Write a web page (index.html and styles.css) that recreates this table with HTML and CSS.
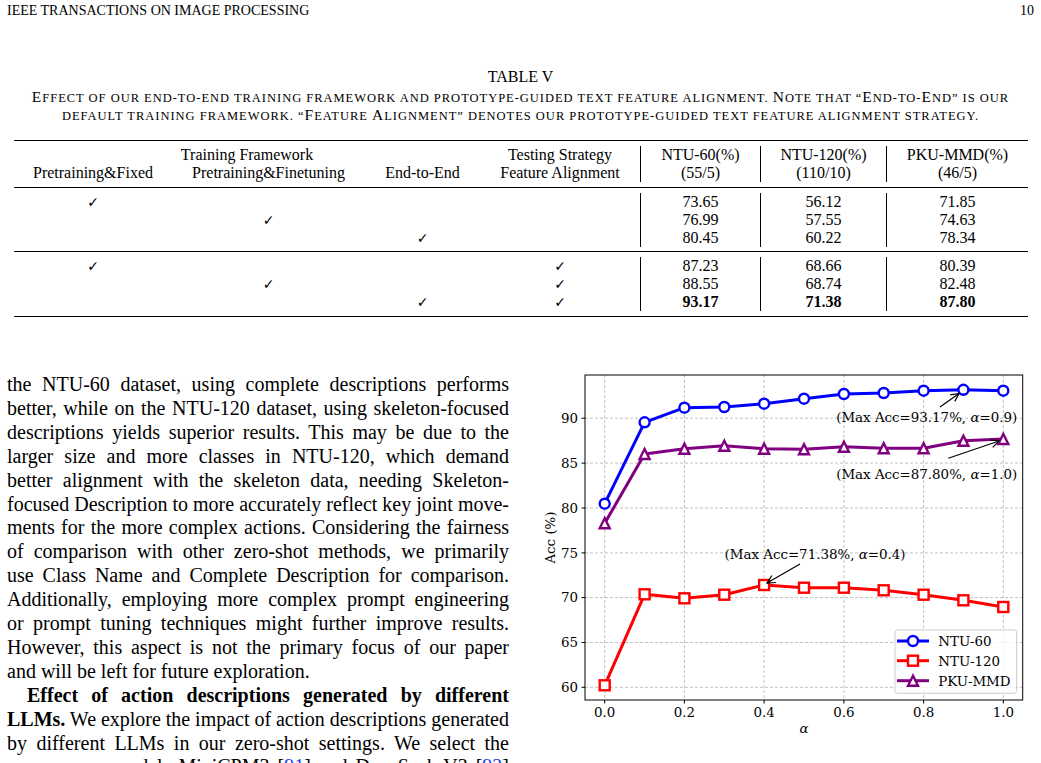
FILE: index.html
```html
<!DOCTYPE html>
<html lang="en">
<head>
  <meta charset="UTF-8">
  <title>IEEE Transactions on Image Processing - page 10</title>
  <link rel="stylesheet" href="styles.css">
</head>
<body>
  <div class="page">
    <header class="running-head">
      <span>IEEE TRANSACTIONS ON IMAGE PROCESSING</span>
      <span>10</span>
    </header>

    <div class="table-float">
      <div class="caption">
        <div class="caption-label">TABLE V</div>
        <div class="caption-text">
          <span class="cap">E</span>ffect of our end-to-end training framework and prototype-guided text feature alignment. <span class="cap">N</span>ote that “<span class="cap">E</span>nd-to-<span class="cap">E</span>nd” is our<br>
          default training framework. “<span class="cap">F</span>eature <span class="cap">A</span>lignment” denotes our prototype-guided text feature alignment strategy.
        </div>
      </div>

      <div class="booktab">
        <div class="tgroup thead">
          <div class="span-train">Training Framework</div>
          <div class="c4 r1">Testing Strategy</div>
          <div class="num both">NTU-60(%)<br>(55/5)</div>
          <div class="num both">NTU-120(%)<br>(110/10)</div>
          <div class="num both">PKU-MMD(%)<br>(46/5)</div>
          <div class="c1 r2">Pretraining&amp;Fixed</div>
          <div class="c2 r2">Pretraining&amp;Finetuning</div>
          <div class="c3 r2">End-to-End</div>
          <div class="c4 r2">Feature Alignment</div>
        </div>

        <div class="tgroup">
          <div class="tick">✓</div><div></div><div></div><div></div>
          <div class="num">73.65</div><div class="num">56.12</div><div class="num">71.85</div>
          <div></div><div class="tick">✓</div><div></div><div></div>
          <div class="num">76.99</div><div class="num">57.55</div><div class="num">74.63</div>
          <div></div><div></div><div class="tick">✓</div><div></div>
          <div class="num">80.45</div><div class="num">60.22</div><div class="num">78.34</div>
        </div>

        <div class="tgroup">
          <div class="tick">✓</div><div></div><div></div><div class="tick">✓</div>
          <div class="num">87.23</div><div class="num">68.66</div><div class="num">80.39</div>
          <div></div><div class="tick">✓</div><div></div><div class="tick">✓</div>
          <div class="num">88.55</div><div class="num">68.74</div><div class="num">82.48</div>
          <div></div><div></div><div class="tick">✓</div><div class="tick">✓</div>
          <div class="num best">93.17</div><div class="num best">71.38</div><div class="num best">87.80</div>
        </div>
      </div>
    </div>

    <div class="columns">
      <div class="text-col">
        <p class="para">
          <span class="ln">the NTU-60 dataset, using complete descriptions performs</span>
          <span class="ln">better, while on the NTU-120 dataset, using skeleton-focused</span>
          <span class="ln">descriptions yields superior results. This may be due to the</span>
          <span class="ln">larger size and more classes in NTU-120, which demand</span>
          <span class="ln">better alignment with the skeleton data, needing Skeleton-</span>
          <span class="ln">focused Description to more accurately reflect key joint move-</span>
          <span class="ln">ments for the more complex actions. Considering the fairness</span>
          <span class="ln">of comparison with other zero-shot methods, we primarily</span>
          <span class="ln">use Class Name and Complete Description for comparison.</span>
          <span class="ln">Additionally, employing more complex prompt engineering</span>
          <span class="ln">or prompt tuning techniques might further improve results.</span>
          <span class="ln">However, this aspect is not the primary focus of our paper</span>
          <span class="ln end">and will be left for future exploration.</span>
        </p>
        <p class="para">
          <span class="ln indent"><b>Effect of action descriptions generated by different</b></span>
          <span class="ln"><b>LLMs.</b> We explore the impact of action descriptions generated</span>
          <span class="ln">by different LLMs in our zero-shot settings. We select the</span>
          <span class="ln">open-source models MiniCPM3 [<span class="cite">91</span>] and DeepSeek-V3 [<span class="cite">92</span>]</span>
        </p>
      </div>

      <figure class="plot">
        <svg width="511" height="393" viewBox="530 370 511 393" xmlns="http://www.w3.org/2000/svg">
          <defs>
            <marker id="mk-circle" markerWidth="16" markerHeight="16" refX="8" refY="8" markerUnits="userSpaceOnUse">
              <circle cx="8" cy="8" r="5" fill="#fff" stroke="#0000ff" stroke-width="2.4"/>
            </marker>
            <marker id="mk-square" markerWidth="16" markerHeight="16" refX="8" refY="8" markerUnits="userSpaceOnUse">
              <rect x="3" y="3" width="10" height="10" fill="#fff" stroke="#ff0000" stroke-width="2.4"/>
            </marker>
            <marker id="mk-tri" markerWidth="16" markerHeight="16" refX="8" refY="8" markerUnits="userSpaceOnUse">
              <path d="M8 3 L3 13 L13 13 Z" fill="#fff" stroke="#800080" stroke-width="2.4"/>
            </marker>
          </defs>

          <!-- grid -->
          <g class="grid">
            <line x1="604.7" y1="375" x2="604.7" y2="700"/>
            <line x1="684.4" y1="375" x2="684.4" y2="700"/>
            <line x1="764.1" y1="375" x2="764.1" y2="700"/>
            <line x1="843.9" y1="375" x2="843.9" y2="700"/>
            <line x1="923.6" y1="375" x2="923.6" y2="700"/>
            <line x1="1003.3" y1="375" x2="1003.3" y2="700"/>
            <line x1="585" y1="418.2" x2="1022.7" y2="418.2"/>
            <line x1="585" y1="463.1" x2="1022.7" y2="463.1"/>
            <line x1="585" y1="508" x2="1022.7" y2="508"/>
            <line x1="585" y1="552.9" x2="1022.7" y2="552.9"/>
            <line x1="585" y1="597.6" x2="1022.7" y2="597.6"/>
            <line x1="585" y1="642.5" x2="1022.7" y2="642.5"/>
            <line x1="585" y1="687.3" x2="1022.7" y2="687.3"/>
          </g>

          <!-- series -->
          <polyline class="series ntu60 marked" points="604.7,503.7 644.6,422.3 684.4,407.7 724.3,407 764.1,403.7 804,398.7 843.9,394 883.7,393 923.6,390.7 963.4,389.8 1003.3,390.7"/>
          <polyline class="series ntu120 marked" points="604.7,685.3 644.6,594.3 684.4,598.3 724.3,594.7 764.1,585 804,587.7 843.9,587.7 883.7,590.3 923.6,594.7 963.4,600.3 1003.3,607"/>
          <polyline class="series pku marked" points="604.7,523.3 644.6,454 684.4,448.7 724.3,445.7 764.1,448.7 804,449.3 843.9,446.7 883.7,448.3 923.6,448.3 963.4,440.7 1003.3,439"/>

          <!-- annotations -->
          <g class="arrow">
            <line x1="940" y1="407" x2="959" y2="393.5"/>
            <path d="M950.2 394.9 L959 393.5 L954.8 401.4"/>
            <line x1="948.3" y1="458.3" x2="999" y2="441"/>
            <path d="M990.1 439.8 L999 441 L992.7 447.4"/>
            <line x1="800" y1="564" x2="767" y2="583"/>
            <path d="M771.9 575.5 L767 583 L775.9 582.5"/>
          </g>
          <g class="label">
            <text x="926.7" y="421.8" text-anchor="middle">(Max Acc=93.17%, <tspan class="it">α</tspan>=0.9)</text>
            <text x="926.7" y="478.8" text-anchor="middle">(Max Acc=87.80%, <tspan class="it">α</tspan>=1.0)</text>
            <text x="815" y="558.8" text-anchor="middle">(Max Acc=71.38%, <tspan class="it">α</tspan>=0.4)</text>
          </g>

          <!-- axes frame and ticks -->
          <rect class="frame" x="585" y="375" width="437.7" height="325"/>
          <g class="ticks">
            <line x1="581.5" y1="418.2" x2="585" y2="418.2"/>
            <line x1="581.5" y1="463.1" x2="585" y2="463.1"/>
            <line x1="581.5" y1="508" x2="585" y2="508"/>
            <line x1="581.5" y1="552.9" x2="585" y2="552.9"/>
            <line x1="581.5" y1="597.6" x2="585" y2="597.6"/>
            <line x1="581.5" y1="642.5" x2="585" y2="642.5"/>
            <line x1="581.5" y1="687.3" x2="585" y2="687.3"/>
            <line x1="604.7" y1="700" x2="604.7" y2="703.5"/>
            <line x1="684.4" y1="700" x2="684.4" y2="703.5"/>
            <line x1="764.1" y1="700" x2="764.1" y2="703.5"/>
            <line x1="843.9" y1="700" x2="843.9" y2="703.5"/>
            <line x1="923.6" y1="700" x2="923.6" y2="703.5"/>
            <line x1="1003.3" y1="700" x2="1003.3" y2="703.5"/>
          </g>
          <g class="label" text-anchor="end">
            <text x="578" y="423">90</text>
            <text x="578" y="467.9">85</text>
            <text x="578" y="512.8">80</text>
            <text x="578" y="557.7">75</text>
            <text x="578" y="602.4">70</text>
            <text x="578" y="647.3">65</text>
            <text x="578" y="692.1">60</text>
          </g>
          <g class="label" text-anchor="middle">
            <text x="604.7" y="717">0.0</text>
            <text x="684.4" y="717">0.2</text>
            <text x="764.1" y="717">0.4</text>
            <text x="843.9" y="717">0.6</text>
            <text x="923.6" y="717">0.8</text>
            <text x="1003.3" y="717">1.0</text>
            <text class="it" x="803.9" y="733">α</text>
            <text x="0" y="0" transform="translate(554.5 537.5) rotate(-90)">Acc (%)</text>
          </g>

          <!-- legend -->
          <rect class="legend-box" x="895" y="630" width="121.7" height="63.3" rx="2.5"/>
          <polyline class="series ntu60 key" points="897,641 913,641 929,641"/>
          <polyline class="series ntu120 key" points="897,660.7 913,660.7 929,660.7"/>
          <polyline class="series pku key" points="897,680.7 913,680.7 929,680.7"/>
          <g class="label">
            <text x="938.3" y="645.8">NTU-60</text>
            <text x="938.3" y="665.5">NTU-120</text>
            <text x="938.3" y="685.5">PKU-MMD</text>
          </g>
        </svg>
      </figure>
    </div>
  </div>
</body>
</html>
```

FILE: styles.css
```css
body {
  margin: 0;
  background: #ffffff;
  color: #000000;
  font-family: 'Liberation Serif', 'Times New Roman', serif;
}

.page {
  width: 1041px;
  height: 763px;
  overflow: hidden;
}

.running-head {
  display: flex;
  justify-content: space-between;
  padding: 3px 7px 0 7px;
  font-size: 14px;
  line-height: 16px;
}

/* table float */
.caption {
  margin-top: 48.6px;
  text-align: center;
  font-size: 16px;
  line-height: 17px;
}

.caption-label {
  margin-bottom: 4.2px;
}

.caption-text {
  text-transform: uppercase;
  font-size: 12.5px;
  line-height: 17px;
  letter-spacing: 0.98px;
}

.caption-text .cap {
  font-size: 15.5px;
  line-height: 1;
}

.booktab {
  width: 1014px;
  margin: 15.2px 0 0 14px;
  border-top: 1.5px solid #000;
  border-bottom: 1.5px solid #000;
  font-size: 16px;
  line-height: 18px;
}

.tgroup {
  display: grid;
  grid-template-columns: 158px 193px 115px 160px 120px 126px 142px;
  padding: 4.5px 0 4.5px 0;
  text-align: center;
}

.tgroup:last-child {
  padding-bottom: 5.5px;
}

.tgroup + .tgroup {
  border-top: 1px solid #000;
}

.thead {
  grid-template-rows: 18px 18px;
  padding: 5px 0 5.5px 0;
}

.span-train {
  grid-column: 1 / 4;
  grid-row: 1;
}

.c1 { grid-column: 1; }
.c2 { grid-column: 2; }
.c3 { grid-column: 3; }
.c4 { grid-column: 4; }
.r1 { grid-row: 1; }
.r2 { grid-row: 2; }

.num {
  border-left: 1px solid #000;
}

.num.both {
  grid-row: 1 / 3;
}

.best {
  font-weight: bold;
}

.tick {
  font-family: 'DejaVu Sans', sans-serif;
  font-size: 14px;
}

/* two column text + figure */
.columns {
  display: flex;
  margin-top: 52.5px;
}

.text-col {
  width: 502px;
  margin-left: 7px;
  padding-top: 3px;
  font-size: 20px;
  line-height: 23.9px;
}

.para {
  margin: 0;
}

.ln {
  display: block;
  text-align: justify;
  text-align-last: justify;
  word-spacing: -3px;
}

.ln.end {
  text-align-last: left;
  word-spacing: 0;
}

.ln.indent {
  padding-left: 20px;
}

.cite {
  color: #1a3cf0;
}

.plot {
  margin: 0 0 0 21px;
  width: 511px;
  height: 393px;
}

.plot svg {
  display: block;
}

.grid line {
  stroke: #b0b0b0;
  stroke-width: 0.8;
  stroke-dasharray: 3 2;
}

.series {
  fill: none;
  stroke-width: 3;
  stroke-linejoin: round;
}

.ntu60 { stroke: #0000ff; }
.ntu120 { stroke: #ff0000; }
.pku { stroke: #800080; }

.ntu60.marked { marker-start: url(#mk-circle); marker-end: url(#mk-circle); }
.ntu120.marked { marker-start: url(#mk-square); marker-end: url(#mk-square); }
.pku.marked { marker-start: url(#mk-tri); marker-end: url(#mk-tri); }

.ntu60.marked,
.ntu60.key { marker-mid: url(#mk-circle); }
.ntu120.marked,
.ntu120.key { marker-mid: url(#mk-square); }
.pku.marked,
.pku.key { marker-mid: url(#mk-tri); }

.arrow line,
.arrow path {
  fill: none;
  stroke: #000;
  stroke-width: 1.2;
}

.frame {
  fill: none;
  stroke: #000;
  stroke-width: 1;
}

.ticks line {
  stroke: #000;
  stroke-width: 1;
}

.label text {
  font-family: 'DejaVu Serif', serif;
  font-size: 13.4px;
  fill: #000;
}

.it {
  font-style: italic;
}

.legend-box {
  fill: rgba(255, 255, 255, 0.8);
  stroke: #cccccc;
  stroke-width: 1;
}
```
